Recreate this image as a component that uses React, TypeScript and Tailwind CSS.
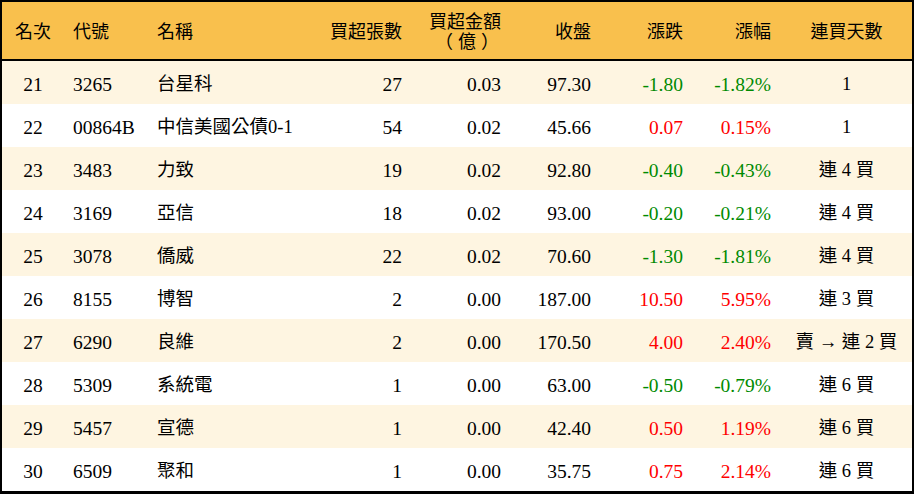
const ROWS = [
  { rank: 21, code: "3265", name: "台星科", vol: "27", amt: "0.03", close: "97.30", chg: "-1.80", pct: "-1.82%", days: "1" },
  { rank: 22, code: "00864B", name: "中信美國公債0-1", vol: "54", amt: "0.02", close: "45.66", chg: "0.07", pct: "0.15%", days: "1" },
  { rank: 23, code: "3483", name: "力致", vol: "19", amt: "0.02", close: "92.80", chg: "-0.40", pct: "-0.43%", days: "連 4 買" },
  { rank: 24, code: "3169", name: "亞信", vol: "18", amt: "0.02", close: "93.00", chg: "-0.20", pct: "-0.21%", days: "連 4 買" },
  { rank: 25, code: "3078", name: "僑威", vol: "22", amt: "0.02", close: "70.60", chg: "-1.30", pct: "-1.81%", days: "連 4 買" },
  { rank: 26, code: "8155", name: "博智", vol: "2", amt: "0.00", close: "187.00", chg: "10.50", pct: "5.95%", days: "連 3 買" },
  { rank: 27, code: "6290", name: "良維", vol: "2", amt: "0.00", close: "170.50", chg: "4.00", pct: "2.40%", days: "賣 → 連 2 買" },
  { rank: 28, code: "5309", name: "系統電", vol: "1", amt: "0.00", close: "63.00", chg: "-0.50", pct: "-0.79%", days: "連 6 買" },
  { rank: 29, code: "5457", name: "宣德", vol: "1", amt: "0.00", close: "42.40", chg: "0.50", pct: "1.19%", days: "連 6 買" },
  { rank: 30, code: "6509", name: "聚和", vol: "1", amt: "0.00", close: "35.75", chg: "0.75", pct: "2.14%", days: "連 6 買" },
];

// column widths sum to 910 (inner width)
const COLS = "grid-cols-[62px_83px_153px_112px_99px_90px_92px_88px_131px]";

export default function App() {
  return (
    <div
      className="w-[914px] h-[496px] bg-white text-black [text-spacing-trim:space-all]"
      style={{ fontFamily: '"Liberation Serif", "Noto Sans CJK TC", serif' }}
    >
      <div className="border-2 border-b-[3px] border-black w-[914px]">
        {/* header */}
        <div className={`grid ${COLS} h-[59px] pt-[3px] bg-[#f9c04d] border-b-2 border-black items-center text-[18px] leading-[20px]`}>
          <div className="text-center">名次</div>
          <div className="pl-[9px]">代號</div>
          <div className="pl-[10px]">名稱</div>
          <div className="text-right pr-[10px]">買超張數</div>
          <div className="text-right pr-[10px] flex flex-col items-end">
            <span>買超金額</span>
            <span className="tracking-[5px] -mr-[3px]">（億）</span>
          </div>
          <div className="text-right pr-[10px]">收盤</div>
          <div className="text-right pr-[10px]">漲跌</div>
          <div className="text-right pr-[10px]">漲幅</div>
          <div className="text-center">連買天數</div>
        </div>

        {ROWS.map((r, i) => {
          const up = !r.chg.startsWith("-");
          const color = up ? "text-[#ff0000]" : "text-[#008a00]";
          return (
            <div
              key={r.rank}
              className={`grid ${COLS} h-[43px] pt-[5px] items-center text-[19.5px] ${i % 2 === 0 ? "bg-[#fef5e1]" : "bg-white"}`}
            >
              <div className="text-center">{r.rank}</div>
              <div className="pl-[9px]">{r.code}</div>
              <div className="pl-[10px] text-[18.5px] whitespace-nowrap">{r.name}</div>
              <div className="text-right pr-[10px]">{r.vol}</div>
              <div className="text-right pr-[10px]">{r.amt}</div>
              <div className="text-right pr-[10px]">{r.close}</div>
              <div className={`text-right pr-[10px] ${color}`}>{r.chg}</div>
              <div className={`text-right pr-[10px] ${color}`}>{r.pct}</div>
              <div className="text-center text-[18.5px] whitespace-nowrap">{r.days}</div>
            </div>
          );
        })}
      </div>
    </div>
  );
}
